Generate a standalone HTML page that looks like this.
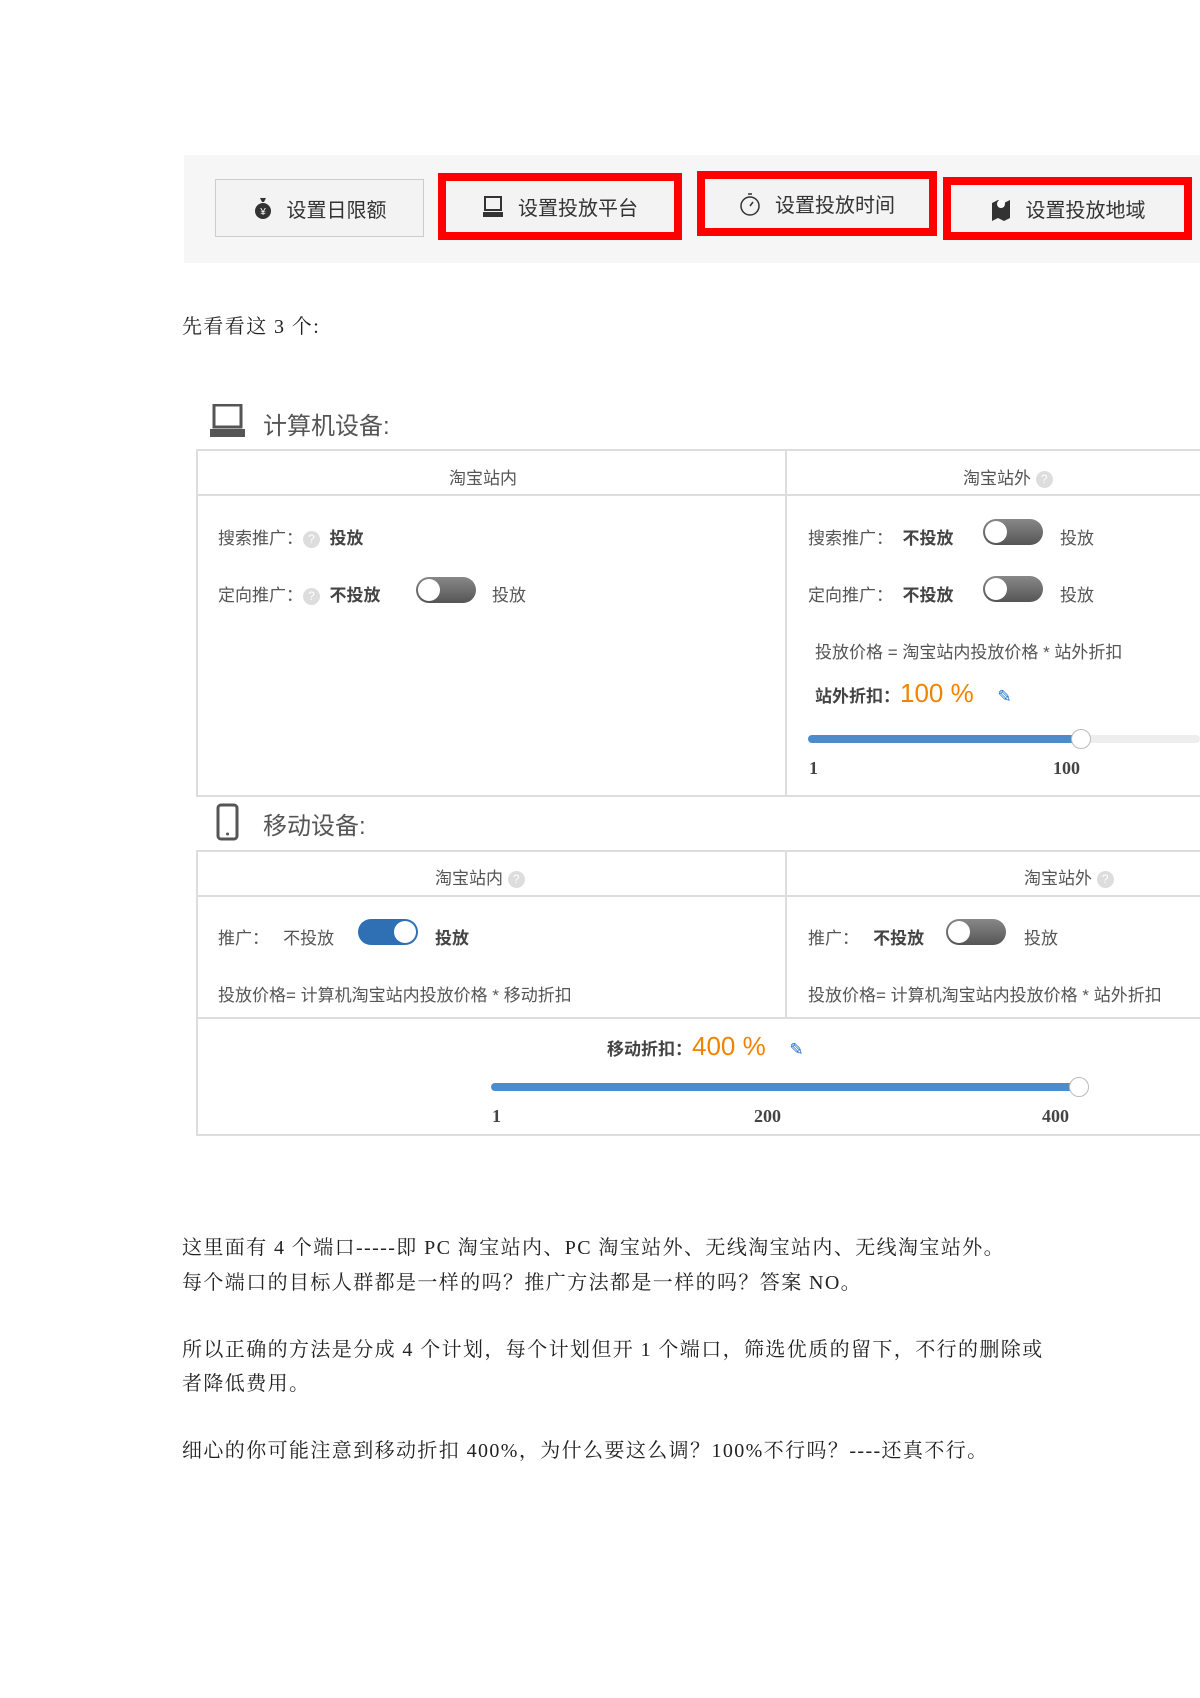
<!DOCTYPE html>
<html><head><meta charset="utf-8"><style>
body{margin:0;width:1200px;height:1698px;background:#fff;position:relative;overflow:hidden;font-family:"Liberation Sans","Noto Sans CJK SC",sans-serif;color:#555}
.a{position:absolute;white-space:nowrap}
.p{font-family:"Liberation Serif","Noto Serif CJK SC",serif;color:#222;font-size:20px;letter-spacing:1.4px}
.btn{position:absolute;background:#f3f3f3;border:1px solid #ccc;font-size:20px;color:#333;display:flex;align-items:center;justify-content:center;gap:14px;box-sizing:border-box}
.red{position:absolute;border:8px solid #f00;box-sizing:border-box}
.line{position:absolute;background:#ddd}
.t{font-size:17px;color:#555}
.b{font-weight:bold;color:#444}
.q{display:inline-block;width:17px;height:17px;border-radius:50%;background:#ddd;color:#fff;font-size:12px;text-align:center;line-height:17px;vertical-align:middle}
.tg{position:absolute;width:60px;height:26px;border-radius:13px;background:linear-gradient(#888,#555)}
.tg::after{content:"";position:absolute;left:2px;top:2px;width:22px;height:22px;border-radius:50%;background:#fff}
.tg.on{background:#2f6fb3}.tg.on::after{left:36px}
.h{font-size:24px;color:#555}
.or{color:#f08300;font-size:26px}
</style></head><body>
<div class="a" style="left:184px;top:155px;width:1016px;height:108px;background:#f6f6f6"></div>
<div class="btn" style="left:215px;top:179px;width:209px;height:58px"><svg width="20" height="24"><path d="M7 2h6l-2 4h-2z" fill="#333"/><ellipse cx="10" cy="15" rx="8" ry="8" fill="#333"/><text x="10" y="19" font-size="10" fill="#fff" text-anchor="middle">¥</text></svg>设置日限额</div>
<div class="btn" style="left:446px;top:181px;width:228px;height:51px;border:none"><svg width="22" height="22"><rect x="3" y="1" width="16" height="13" fill="none" stroke="#333" stroke-width="2"/><rect x="1" y="16" width="20" height="5" fill="#333"/></svg>设置投放平台</div>
<div class="red" style="left:438px;top:173px;width:244px;height:67px"></div>
<div class="btn" style="left:705px;top:179px;width:224px;height:49px;border:none"><svg width="22" height="24"><circle cx="11" cy="14" r="9" fill="none" stroke="#333" stroke-width="1.5"/><path d="M9 2h4M11 14l3-4" stroke="#333" stroke-width="1.5"/></svg>设置投放时间</div>
<div class="red" style="left:697px;top:171px;width:240px;height:65px"></div>
<div class="btn" style="left:951px;top:185px;width:233px;height:47px;border:none"><svg width="22" height="24"><path d="M2 6l6-3 6 3 6-3v18l-6 3-6-3-6 3z" fill="#333"/><circle cx="11" cy="7" r="4" fill="#fff"/></svg>设置投放地域</div>
<div class="red" style="left:943px;top:177px;width:249px;height:63px"></div>

<div class="a p" style="left:182px;top:310px">先看看这 3 个:</div>

<svg class="a" style="left:210px;top:404px" width="36" height="34"><rect x="4" y="1" width="27" height="22" fill="none" stroke="#555" stroke-width="3"/><rect x="0" y="25" width="35" height="8" fill="#555"/></svg>
<div class="a h" style="left:263px;top:406px">计算机设备:</div>
<div class="line" style="left:196px;top:449px;width:1004px;height:2px"></div>
<div class="line" style="left:196px;top:494px;width:1004px;height:2px"></div>
<div class="line" style="left:196px;top:449px;width:2px;height:348px"></div>
<div class="line" style="left:785px;top:449px;width:2px;height:348px"></div>
<div class="line" style="left:196px;top:795px;width:1004px;height:2px"></div>
<div class="a t" style="left:449px;top:464px">淘宝站内</div>
<div class="a t" style="left:963px;top:464px">淘宝站外 <span class="q">?</span></div>
<div class="a t" style="left:218px;top:524px">搜索推广：<span class="q">?</span> &nbsp;<span class="b">投放</span></div>
<div class="a t" style="left:218px;top:581px">定向推广：<span class="q">?</span> &nbsp;<span class="b">不投放</span></div>
<div class="tg" style="left:416px;top:577px"></div>
<div class="a t" style="left:492px;top:581px">投放</div>
<div class="a t" style="left:808px;top:524px">搜索推广： &nbsp;<span class="b">不投放</span></div>
<div class="tg" style="left:983px;top:519px"></div>
<div class="a t" style="left:1060px;top:524px">投放</div>
<div class="a t" style="left:808px;top:581px">定向推广： &nbsp;<span class="b">不投放</span></div>
<div class="tg" style="left:983px;top:576px"></div>
<div class="a t" style="left:1060px;top:581px">投放</div>
<div class="a t" style="left:815px;top:638px">投放价格 = 淘宝站内投放价格 * 站外折扣</div>
<div class="a t" style="left:815px;top:678px"><span class="b">站外折扣：</span><span class="or">100 %</span> &nbsp;&nbsp;&nbsp;&nbsp;<span style="color:#1a6fd0">✎</span></div>
<div class="a" style="left:808px;top:735px;width:392px;height:8px;background:#eee;border-radius:4px"></div>
<div class="a" style="left:808px;top:735px;width:272px;height:8px;background:#4a8ccc;border-radius:4px"></div>
<div class="a" style="left:1071px;top:729px;width:18px;height:18px;border-radius:50%;background:#fff;border:1px solid #bbb"></div>
<div class="a b" style="left:809px;top:758px;font-size:18px;font-family:'Liberation Serif',serif">1</div>
<div class="a b" style="left:1053px;top:758px;font-size:18px;font-family:'Liberation Serif',serif">100</div>

<svg class="a" style="left:216px;top:803px" width="24" height="38"><rect x="2" y="2" width="19" height="34" rx="3" fill="none" stroke="#555" stroke-width="3"/><circle cx="11.5" cy="31" r="1.5" fill="#555"/></svg>
<div class="a h" style="left:263px;top:806px">移动设备:</div>
<div class="line" style="left:196px;top:850px;width:1004px;height:2px"></div>
<div class="line" style="left:196px;top:895px;width:1004px;height:2px"></div>
<div class="line" style="left:196px;top:1017px;width:1004px;height:2px"></div>
<div class="line" style="left:196px;top:850px;width:2px;height:286px"></div>
<div class="line" style="left:785px;top:850px;width:2px;height:168px"></div>
<div class="line" style="left:196px;top:1134px;width:1004px;height:2px"></div>
<div class="a t" style="left:435px;top:864px">淘宝站内 <span class="q">?</span></div>
<div class="a t" style="left:1024px;top:864px">淘宝站外 <span class="q">?</span></div>
<div class="a t" style="left:218px;top:924px">推广： &nbsp;&nbsp;不投放</div>
<div class="tg on" style="left:358px;top:919px"></div>
<div class="a t b" style="left:435px;top:924px">投放</div>
<div class="a t" style="left:808px;top:924px">推广： &nbsp;&nbsp;<span class="b">不投放</span></div>
<div class="tg" style="left:946px;top:919px"></div>
<div class="a t" style="left:1024px;top:924px">投放</div>
<div class="a t" style="left:218px;top:981px">投放价格= 计算机淘宝站内投放价格 * 移动折扣</div>
<div class="a t" style="left:808px;top:981px">投放价格= 计算机淘宝站内投放价格 * 站外折扣</div>
<div class="a t" style="left:607px;top:1031px"><span class="b">移动折扣：</span><span class="or">400 %</span> &nbsp;&nbsp;&nbsp;&nbsp;<span style="color:#1a6fd0">✎</span></div>
<div class="a" style="left:491px;top:1083px;width:590px;height:8px;background:#4a8ccc;border-radius:4px"></div>
<div class="a" style="left:1069px;top:1077px;width:18px;height:18px;border-radius:50%;background:#fff;border:1px solid #bbb"></div>
<div class="a b" style="left:492px;top:1106px;font-size:18px;font-family:'Liberation Serif',serif">1</div>
<div class="a b" style="left:754px;top:1106px;font-size:18px;font-family:'Liberation Serif',serif">200</div>
<div class="a b" style="left:1042px;top:1106px;font-size:18px;font-family:'Liberation Serif',serif">400</div>

<div class="a p" style="left:182px;top:1231px">这里面有 4 个端口-----即 PC 淘宝站内、PC 淘宝站外、无线淘宝站内、无线淘宝站外。</div>
<div class="a p" style="left:182px;top:1266px">每个端口的目标人群都是一样的吗？推广方法都是一样的吗？答案 NO。</div>
<div class="a p" style="left:182px;top:1333px">所以正确的方法是分成 4 个计划，每个计划但开 1 个端口，筛选优质的留下，不行的删除或</div>
<div class="a p" style="left:182px;top:1367px">者降低费用。</div>
<div class="a p" style="left:182px;top:1434px">细心的你可能注意到移动折扣 400%，为什么要这么调？100%不行吗？----还真不行。</div>
</body></html>
